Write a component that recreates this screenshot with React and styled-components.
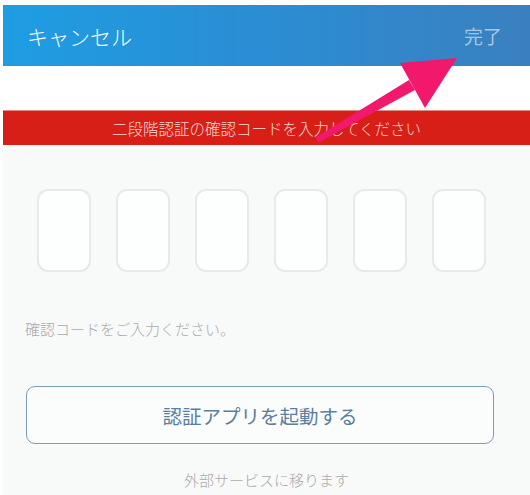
import React from 'react';
import styled, { createGlobalStyle } from 'styled-components';

const GlobalStyle = createGlobalStyle`
    body {
        margin: 0;
        background: #ffffff;
        font-family: "Noto Sans CJK JP", "Noto Sans", sans-serif;
    }
`;

const Page = styled.div`
    position: relative;
    width: 530px;
    height: 495px;
    padding: 5px 0 0 3px;
    box-sizing: border-box;
    overflow: hidden;
    background: #ffffff;
`;

const Header = styled.div`
    height: 61px;
    display: flex;
    align-items: center;
    justify-content: space-between;
    padding: 0 28px 0 24px;
    background: linear-gradient(90deg, #1e9de3 0%, #2b8dd3 50%, #3a80c0 100%);
`;

const HeaderButton = styled.span`
    font-size: ${props => props.size}px;
    font-weight: ${props => props.muted ? 400 : 300};
    color: ${props => props.muted ? '#a6c6e4' : '#ffffff'};
`;

const Spacer = styled.div`
    height: 44px;
    background: #ffffff;
`;

const Banner = styled.div`
    height: 35px;
    display: flex;
    align-items: center;
    justify-content: center;
    background: #d81f17;
    color: #f6d8d3;
    font-size: 15.5px;
    font-weight: 300;
    border-top: 1px solid #e88a84;
    box-sizing: border-box;
`;

const Content = styled.div`
    background: #f8f9f9;
    padding: 44px 0 40px;
`;

const CodeRow = styled.div`
    display: flex;
    gap: 25px;
    padding-left: 34px;
`;

const CodeBox = styled.div`
    width: 54px;
    height: 83px;
    box-sizing: border-box;
    border: 2px solid #e8e9e9;
    border-radius: 11px;
    background: #fdfefe;
`;

const Hint = styled.p`
    margin: 46px 0 0 22px;
    font-size: 15px;
    font-weight: 300;
    color: #ababab;
`;

const LaunchButton = styled.button`
    display: flex;
    align-items: center;
    justify-content: center;
    margin: 47px 0 0 23px;
    width: 468px;
    height: 58px;
    box-sizing: border-box;
    border: 1.5px solid #7b9cba;
    border-radius: 9px;
    background: #fbfcfc;
    font-family: inherit;
    font-size: 19.5px;
    font-weight: 400;
    color: #5a7f9e;
`;

const Note = styled.p`
    margin: 25px 0 0;
    text-align: center;
    font-size: 15px;
    font-weight: 300;
    color: #ababab;
`;

const Arrow = styled.svg`
    position: absolute;
    left: 0;
    top: 0;
    pointer-events: none;
`;

export default function App() {
    const boxes = [0, 1, 2, 3, 4, 5];
    return (
        <Page>
            <GlobalStyle />
            <Header>
                <HeaderButton size={21}>キャンセル</HeaderButton>
                <HeaderButton size={19} muted>完了</HeaderButton>
            </Header>
            <Spacer />
            <Banner>二段階認証の確認コードを入力してください</Banner>
            <Content>
                <CodeRow>
                    {boxes.map(i => <CodeBox key={i} />)}
                </CodeRow>
                <Hint>確認コードをご入力ください。</Hint>
                <LaunchButton>認証アプリを起動する</LaunchButton>
                <Note>外部サービスに移ります</Note>
            </Content>
            <Arrow width="530" height="495" viewBox="0 0 530 495">
                <polygon points="318.5,142.5 315.5,137.5 409,80 415,90" fill="#f2186b" />
                <polygon points="457,58 400,63 425,108" fill="#f2186b" />
            </Arrow>
        </Page>
    );
}
